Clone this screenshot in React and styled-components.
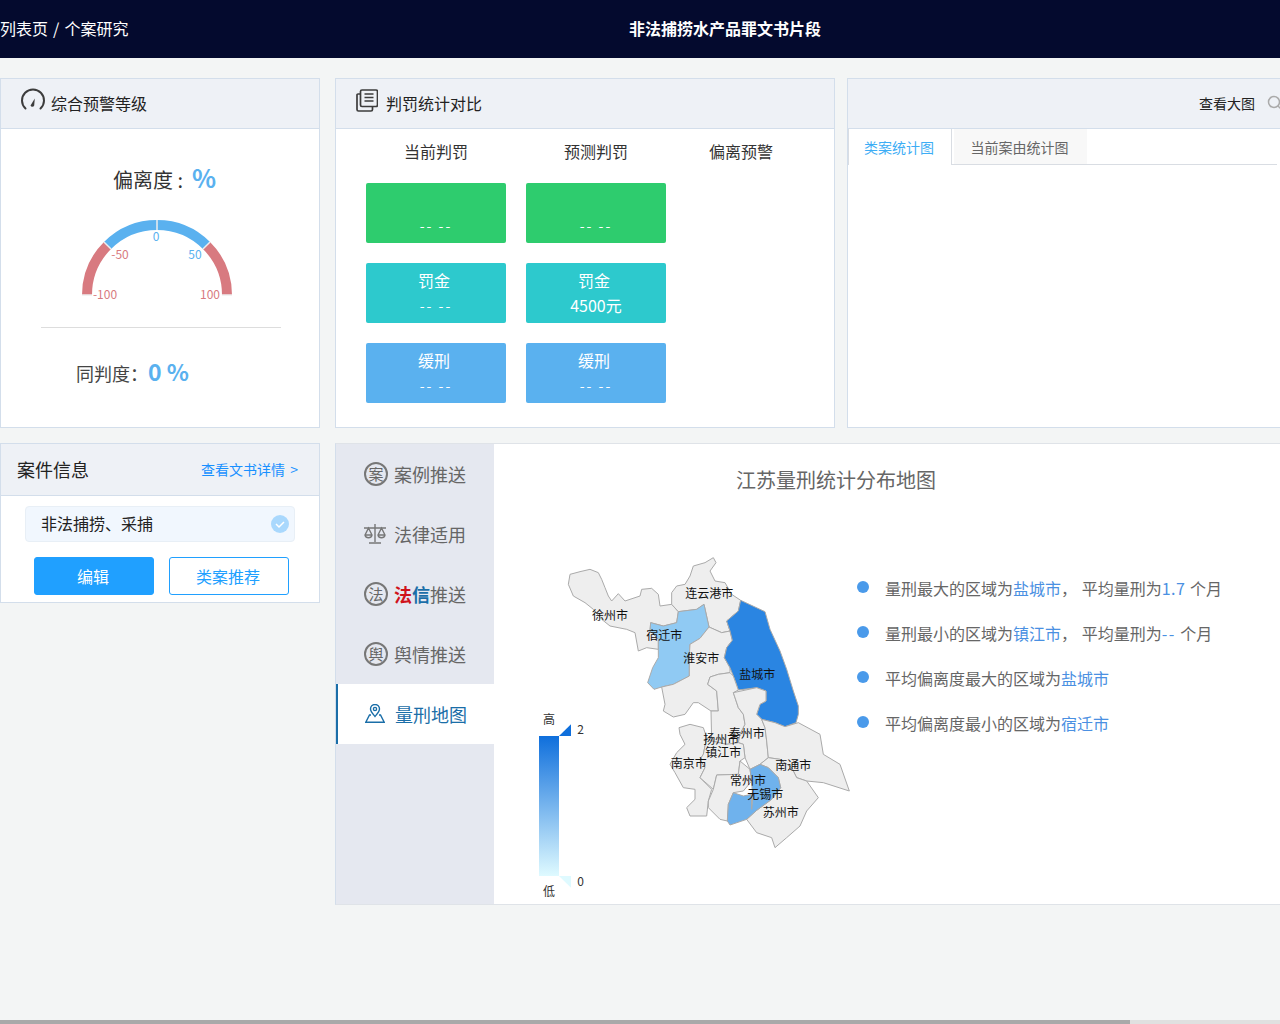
import React from "react";
import styled, { createGlobalStyle } from "styled-components";

const GlobalStyle = createGlobalStyle`
  html, body {
    margin: 0;
    height: 100%;
    background: #f3f5f5;
    font-family: "Noto Sans CJK SC", "Liberation Sans", sans-serif;
    overflow: hidden;
  }
  * { box-sizing: border-box; }
`;

const Viewport = styled.div`
  width: 100vw;
  height: 100vh;
  overflow: hidden;
`;

const ScrollTrack = styled.div`
  position: fixed;
  left: 0;
  right: 0;
  bottom: 0;
  height: 4px;
  background: #e0e0e0;
`;

const ScrollThumb = styled.div`
  width: 1130px;
  height: 4px;
  background: #a9a9a9;
`;

const Page = styled.div`
  width: 1450px;
`;

const Header = styled.header`
  height: 58px;
  padding-bottom: 2px;
  background: #040a2e;
  color: #fff;
  display: grid;
  grid-template-columns: 1fr auto 1fr;
  align-items: center;
  font-size: 16px;
`;

const Crumb = styled.div`
  word-spacing: 1.5px;
`;

const HeaderTitle = styled.div`
  font-weight: 700;
`;

const Main = styled.main`
  padding-top: 20px;
  display: flex;
  flex-direction: column;
  gap: 15px;
`;

const Row = styled.div`
  display: flex;
  align-items: flex-start;
`;

const Card = styled.section`
  width: ${(p) => p.$width}px;
  height: ${(p) => p.$height}px;
  margin-right: ${(p) => p.$gap || 0}px;
  background: #fff;
  border: 1px solid #d3deeb;
  flex-shrink: 0;
`;

const CardHead = styled.div`
  height: 50px;
  padding-bottom: 2px;
  background: #eef1f6;
  border-bottom: 1px solid #d3deeb;
  display: flex;
  align-items: center;
  gap: ${(p) => p.$gap}px;
  padding-left: ${(p) => p.$pad}px;
  font-size: 16px;
  color: #222;
  svg {
    margin-bottom: 4px;
  }
`;

const GaugeBody = styled.div`
  display: flex;
  flex-direction: column;
`;

const Deviation = styled.div`
  margin-top: 30px;
  height: 40px;
  display: flex;
  align-items: center;
  gap: 9px;
  padding-left: 112px;
  font-size: 20px;
  color: #333;
`;

const BigValue = styled.span`
  font-size: ${(p) => p.$size}px;
  font-weight: 700;
  color: #5ab1ef;
  position: relative;
  top: -2px;
`;

const GaugeSvg = styled.svg`
  display: block;
`;

const Divider = styled.div`
  width: 240px;
  height: 1px;
  margin: 18px 0 0 40px;
  background: #ddd;
`;

const Same = styled.div`
  margin: 25px 0 0 75px;
  height: 40px;
  display: flex;
  align-items: center;
  font-size: 18px;
  color: #444;
`;

const Compare = styled.div`
  display: grid;
  grid-template-columns: 140px 140px 110px;
  column-gap: 20px;
  row-gap: 20px;
  padding: 0 0 0 30px;
`;

const ColLabel = styled.div`
  height: 44px;
  padding-bottom: 1px;
  display: flex;
  align-items: center;
  justify-content: center;
  font-size: 16px;
  color: #333;
  grid-row: 1;
  margin-bottom: -10px;
`;

const Block = styled.div`
  height: 60px;
  border-radius: 2px;
  background: ${(p) => p.$color};
  grid-column: ${(p) => p.$col};
  color: #fff;
  font-size: 16px;
  text-align: center;
  display: flex;
  flex-direction: column;
  align-items: center;
  padding-top: 5px;
  line-height: 24px;
`;

const BlockTitle = styled.div`
  height: 24px;
  padding-right: 4px;
`;

const BlockValue = styled.div`
  height: 26px;
  line-height: 26px;
  font-size: ${(p) => (p.$dash ? 14 : 16)}px;
  letter-spacing: ${(p) => (p.$dash ? 2 : 0)}px;
`;

const BigPicHead = styled(CardHead)`
  padding-left: 351px;
  font-size: 14px;
  gap: 12px;
  svg {
    margin-bottom: 0;
  }
`;

const Tabs = styled.div`
  width: 429px;
  height: 36px;
  display: flex;
  border-bottom: 1px solid #d9dde3;
`;

const Tab = styled.div`
  height: ${(p) => (p.$active ? 36 : 35)}px;
  width: ${(p) => p.$width}px;
  margin-right: 2px;
  padding-right: 2px;
  display: flex;
  align-items: center;
  justify-content: center;
  font-size: 14px;
  color: ${(p) => (p.$active ? "#3dadf5" : "#666")};
  background: ${(p) => (p.$active ? "#fff" : "#f8f8f8")};
  border-left: ${(p) => (p.$active ? "1px solid #d9dde3" : "none")};
  border-right: ${(p) => (p.$active ? "1px solid #d9dde3" : "none")};
  position: relative;
  z-index: 1;
`;

const LeftCol = styled.div`
  width: 320px;
  margin-right: 15px;
  flex-shrink: 0;
`;

const InfoHead = styled.div`
  height: 52px;
  background: #eef1f6;
  border-bottom: 1px solid #d3deeb;
  padding: 0 21px 2px 16px;
  display: flex;
  align-items: center;
  justify-content: space-between;
  font-size: 18px;
  color: #222;
`;

const DocLink = styled.a`
  font-size: 14px;
  word-spacing: 2px;
  color: #1890ff;
`;

const Tag = styled.div`
  margin: 10px 0 0 24px;
  width: 270px;
  height: 36px;
  background: #f1f7fe;
  border: 1px solid #e8eff6;
  border-radius: 4px;
  padding: 0 5px 2px 15px;
  display: flex;
  align-items: center;
  justify-content: space-between;
  font-size: 16px;
  color: #222;
  svg {
    margin-top: 2px;
  }
`;

const Buttons = styled.div`
  margin: 15px 0 0 33px;
  display: flex;
  gap: 15px;
`;

const Button = styled.button`
  width: 120px;
  height: 38px;
  border-radius: 3px;
  font-family: inherit;
  font-size: 16px;
  border: 1px solid #20a0ff;
  background: ${(p) => (p.$outline ? "#fff" : "#20a0ff")};
  color: ${(p) => (p.$outline ? "#20a0ff" : "#fff")};
  padding: 0 2px 0 0;
`;

const MapCard = styled.section`
  width: 1115px;
  height: 462px;
  background: #fff;
  border: 1px solid #dfe3e8;
  border-left: 1px solid #d3deeb;
  display: flex;
  flex-shrink: 0;
`;

const Sidebar = styled.nav`
  width: 158px;
  background: #e5e8f0;
  flex-shrink: 0;
`;

const NavItem = styled.div`
  height: 60px;
  padding-bottom: 1px;
  display: flex;
  align-items: center;
  gap: ${(p) => p.$gap || 6}px;
  padding-left: ${(p) => (p.$active ? 27 : 28)}px;
  font-size: 18px;
  color: ${(p) => (p.$active ? "#1a6ea8" : "#666")};
  background: ${(p) => (p.$active ? "#fff" : "transparent")};
  border-left: ${(p) => (p.$active ? "2px solid #1a6ea8" : "none")};
`;

const NavBadge = styled.span`
  width: 24px;
  height: 24px;
  border: 2px solid #777;
  border-radius: 50%;
  display: flex;
  align-items: center;
  justify-content: center;
  font-size: 15px;
  line-height: 1;
`;

const Brand = styled.b`
  color: ${(p) => p.$color};
`;

const MapArea = styled.div`
  flex: 1;
  min-width: 0;
`;

const MapTitle = styled.h2`
  width: 684px;
  margin: 0;
  padding-top: 20px;
  height: 107px;
  text-align: center;
  font-size: 20px;
  font-weight: 400;
  line-height: 32px;
  color: #666;
`;

const MapRow = styled.div`
  display: flex;
  padding-left: 36px;
`;

const MapSvg = styled.svg`
  display: block;
  flex-shrink: 0;
`;

const Facts = styled.ul`
  list-style: none;
  margin: 22px 0 0 -3px;
  padding: 0;
  display: flex;
  flex-direction: column;
  gap: 15px;
`;

const Fact = styled.li`
  height: 30px;
  display: flex;
  align-items: center;
  font-size: 16px;
  word-spacing: 1px;
  white-space: pre;
  color: #666;
  padding-left: 28px;
  position: relative;
  &::before {
    content: "";
    position: absolute;
    left: 0;
    top: 8px;
    width: 12px;
    height: 12px;
    border-radius: 50%;
    background: #4a9aea;
  }
`;

const Hl = styled.span`
  color: #4a90e2;
  letter-spacing: ${(p) => p.$track || 0}px;
`;

const regions = [
  { name: "xuzhou", fill: "#eee", d: "120,70 150,62 180,55 205,65 215,85 225,110 235,135 245,150 265,128 285,150 330,135 335,115 365,112 385,130 390,165 425,160 445,182 440,215 400,225 362,215 360,240 385,265 385,295 350,290 325,300 315,245 290,235 240,225 215,205 190,175 165,155 130,135 115,100" },
  { name: "lianyungang", fill: "#eee", d: "490,45 525,35 550,20 558,35 540,60 555,90 585,95 605,130 632,148 625,180 590,210 600,240 575,245 537,228 522,160 500,175 445,182 425,160 425,125 440,105 465,100 480,75" },
  { name: "suqian", fill: "#90caf3", d: "362,215 400,225 440,215 445,182 500,175 522,160 537,228 510,262 480,280 478,315 478,375 430,400 395,408 372,415 353,395 368,350 385,320 385,265 360,240" },
  { name: "huaian", fill: "#eee", d: "537,228 575,245 600,240 607,268 590,290 583,320 600,350 600,365 565,370 540,378 533,400 560,420 565,480 543,480 505,455 490,455 465,490 430,498 400,480 405,460 395,408 430,400 478,375 478,315 480,280 510,262" },
  { name: "yancheng", fill: "#2a85e2", d: "632,148 705,182 720,235 750,300 770,355 790,420 805,465 805,490 798,515 765,527 735,515 695,505 680,490 690,460 708,450 708,420 680,410 625,417 610,375 600,350 583,320 590,290 607,268 600,240 590,210 625,180" },
  { name: "yangzhou", fill: "#eee", d: "540,378 565,370 600,365 610,375 625,417 610,425 625,470 640,490 645,520 630,550 625,575 590,580 545,570 543,480 565,480 560,420 533,400" },
  { name: "taizhou", fill: "#eee", d: "610,425 680,410 708,420 708,450 690,460 680,490 695,505 705,530 710,570 715,620 690,640 660,655 645,620 640,580 625,575 630,550 645,520 640,490 625,470" },
  { name: "nantong", fill: "#eee", d: "695,505 735,515 765,527 805,515 870,550 880,610 930,640 958,720 880,695 830,690 800,680 785,650 750,625 715,620 710,570 705,530" },
  { name: "nanjing", fill: "#eee", d: "447,530 480,520 520,530 530,560 520,610 510,625 525,650 510,680 545,715 535,750 530,795 480,795 470,770 495,745 495,715 460,710 435,665 420,640 440,605 465,580 450,550" },
  { name: "zhenjiang", fill: "#eee", d: "545,570 590,580 625,575 640,580 645,620 630,630 625,670 560,672 550,715 510,680 525,650 510,625 520,610 530,560" },
  { name: "changzhou", fill: "#eee", d: "560,672 625,670 630,630 660,655 665,690 640,720 610,725 595,760 592,810 570,805 535,770 535,750 550,715" },
  { name: "suzhou", fill: "#eee", d: "715,620 750,625 785,650 800,680 830,690 865,740 830,780 810,825 770,860 735,890 725,860 680,845 650,805 680,778 725,745 752,710 745,680 715,650 690,640" },
  { name: "wuxi", fill: "#6fb2ed", d: "660,655 690,640 715,650 745,680 752,710 725,745 680,778 650,805 600,822 592,810 595,760 610,725 640,735 665,730 665,775 668,740 665,690" },
];

const cityLabels = [
  ["连云港市", 538, 140],
  ["徐州市", 240, 206],
  ["宿迁市", 403, 266],
  ["淮安市", 514, 337],
  ["盐城市", 682, 383],
  ["泰州市", 650, 560],
  ["扬州市", 574, 578],
  ["镇江市", 580, 617],
  ["南京市", 476, 651],
  ["南通市", 790, 657],
  ["常州市", 654, 702],
  ["无锡市", 706, 743],
  ["苏州市", 752, 798],
];

function GaugeIcon() {
  return (
    <svg width="26" height="26" viewBox="0 0 26 26" fill="none" stroke="#3c3c3c" strokeWidth="2" strokeLinecap="round">
      <path d="M5.500 20.500A11 11 0 1 1 20.500 20.500" />
      <path d="M10.500 17.500 14.800 10.500 14.200 17.500A2 2 0 0 1 10.500 17.500Z" fill="#3c3c3c" stroke="none" />
    </svg>
  );
}

function CopyIcon() {
  return (
    <svg width="22" height="23" viewBox="0 0 22 23" fill="none" stroke="#3c3c3c" strokeWidth="1.700" strokeLinejoin="round">
      <path d="M6 1h14a1.500 1.500 0 0 1 1.500 1.500V16a1.500 1.500 0 0 1-1.500 1.500H6A1.500 1.500 0 0 1 4.500 16V2.500A1.500 1.500 0 0 1 6 1Z" />
      <path d="M4.500 5H2A1 1 0 0 0 1 6v14.500A1.500 1.500 0 0 0 2.500 22H15a1.500 1.500 0 0 0 1.500-1.500v-3" />
      <path d="M8.500 5h9M8.500 8.500h9M8.500 12h9" strokeWidth="1.300" />
    </svg>
  );
}

function SearchIcon() {
  return (
    <svg width="16" height="16" viewBox="0 0 16 16" fill="none" stroke="#aaa" strokeWidth="1.500">
      <circle cx="7" cy="7" r="5.500" />
      <path d="M11 11l4 4" />
    </svg>
  );
}

function CheckDot() {
  return (
    <svg width="18" height="18" viewBox="0 0 18 18">
      <circle cx="9" cy="9" r="9" fill="#a9d8fd" />
      <path d="M5 9l3 3 5-5" fill="none" stroke="#fff" strokeWidth="1.500" />
    </svg>
  );
}

function ScaleIcon() {
  return (
    <svg width="22" height="20" viewBox="0 0 22 20" fill="none" stroke="#777" strokeWidth="1.400">
      <path d="M0 4h22M11 0v18M5 19h12" />
      <path d="M4.500 4 1 11a3.600 3.600 0 0 0 7 0Z M1 11h7" />
      <path d="M17.500 4 14 11a3.600 3.600 0 0 0 7 0Z M14 11h7" />
    </svg>
  );
}

function PinIcon() {
  return (
    <svg width="20" height="19" viewBox="0 0 20 19" fill="none" stroke="#1a6ea8" strokeWidth="1.400">
      <path d="M10 12.500C7.500 9.500 5.500 7.500 5.500 5a4.500 4.500 0 0 1 9 0C14.500 7.500 12.500 9.500 10 12.500Z" />
      <circle cx="10" cy="5" r="1.600" />
      <path d="M6 11H4.500L.8 18.200h18.400L15.500 11H14" />
    </svg>
  );
}

function Gauge() {
  const cx = 156;
  const cy = 96;
  const r = 70;
  const point = (deg) => {
    const a = (deg * Math.PI) / 180;
    return [cx + r * Math.cos(a), cy - r * Math.sin(a)];
  };
  const arc = (from, to) => {
    const [x1, y1] = point(from);
    const [x2, y2] = point(to);
    return `M${x1} ${y1}A${r} ${r} 0 0 1 ${x2} ${y2}`;
  };
  const tick = (deg) => {
    const a = (deg * Math.PI) / 180;
    return `M${cx + 65 * Math.cos(a)} ${cy - 65 * Math.sin(a)}L${cx + 75 * Math.cos(a)} ${cy - 75 * Math.sin(a)}`;
  };
  return (
    <GaugeSvg width="318" height="110" viewBox="0 0 318 110" fontFamily="Noto Sans CJK SC, sans-serif" fontSize="12">
      <g fill="none" strokeWidth="10">
        <path d={arc(180, 135)} stroke="#d87a80" />
        <path d={arc(135, 45)} stroke="#5ab1ef" />
        <path d={arc(45, 0)} stroke="#d87a80" />
      </g>
      <g fill="none" stroke="#eee" strokeWidth="1.500">
        <path d={tick(135)} />
        <path d={tick(45)} />
        <path d={tick(180)} />
        <path d={tick(0)} />
        <path d={tick(90)} />
      </g>
      <g textAnchor="middle">
        <text x="155" y="42" fill="#5ab1ef">0</text>
        <text x="119" y="60" fill="#d87a80">-50</text>
        <text x="194" y="60" fill="#5ab1ef">50</text>
        <text x="104" y="100" fill="#d87a80">-100</text>
        <text x="209" y="100" fill="#d87a80">100</text>
      </g>
    </GaugeSvg>
  );
}

function JiangsuMap() {
  return (
    <MapSvg width="330" height="355" viewBox="0 0 990 1065" fontFamily="Noto Sans CJK SC, sans-serif">
      <defs>
        <linearGradient id="scale" x1="0" y1="0" x2="0" y2="1">
          <stop offset="0" stopColor="#0f6fdc" />
          <stop offset="1" stopColor="#dffaff" />
        </linearGradient>
      </defs>
      {regions.map((r) => (
        <polygon key={r.name} points={r.d} fill={r.fill} stroke="#aaa" strokeWidth="3" strokeLinejoin="round" />
      ))}
      <g fontSize="36" textAnchor="middle" fill="#111">
        {cityLabels.map(([label, x, y]) => (
          <text key={label} x={x} y={y}>{label}</text>
        ))}
      </g>
      <rect x="27" y="555" width="60" height="420" fill="url(#scale)" />
      <polygon points="87,555 123,555 123,520" fill="#0f6fdc" />
      <polygon points="87,975 123,975 123,1010" fill="#dffaff" />
      <g fontSize="36" fill="#333">
        <text x="57" y="519" textAnchor="middle">高</text>
        <text x="57" y="1036" textAnchor="middle">低</text>
        <text x="142" y="549">2</text>
        <text x="142" y="1006">0</text>
      </g>
    </MapSvg>
  );
}

const rows = [
  { color: "#2ecc6e", title: "", left: "-- --", right: "-- --" },
  { color: "#2dc9cd", title: "罚金", left: "-- --", right: "4500元" },
  { color: "#5ab1ef", title: "缓刑", left: "-- --", right: "-- --" },
];

function App() {
  return (
    <Viewport>
      <GlobalStyle />
      <Page>
        <Header>
          <Crumb>列表页 / 个案研究</Crumb>
          <HeaderTitle>非法捕捞水产品罪文书片段</HeaderTitle>
          <div />
        </Header>
        <Main>
          <Row>
            <Card $width={320} $height={350} $gap={15}>
              <CardHead $pad={19} $gap={5}>
                <GaugeIcon />
                <span>综合预警等级</span>
              </CardHead>
              <GaugeBody>
                <Deviation>
                  <span>偏离度 :</span>
                  <BigValue $size={25}>%</BigValue>
                </Deviation>
                <Gauge />
                <Divider />
                <Same>
                  <span>同判度：</span>
                  <BigValue $size={23}>0 %</BigValue>
                </Same>
              </GaugeBody>
            </Card>
            <Card $width={500} $height={350} $gap={12}>
              <CardHead $pad={20} $gap={8}>
                <CopyIcon />
                <span>判罚统计对比</span>
              </CardHead>
              <Compare>
                <ColLabel>当前判罚</ColLabel>
                <ColLabel>预测判罚</ColLabel>
                <ColLabel>偏离预警</ColLabel>
                {rows.map((r) => (
                  <React.Fragment key={r.color}>
                    <Block $color={r.color} $col={1}>
                      <BlockTitle>{r.title}</BlockTitle>
                      <BlockValue $dash>{r.left}</BlockValue>
                    </Block>
                    <Block $color={r.color} $col={2}>
                      <BlockTitle>{r.title}</BlockTitle>
                      <BlockValue $dash={r.right === "-- --"}>{r.right}</BlockValue>
                    </Block>
                  </React.Fragment>
                ))}
              </Compare>
            </Card>
            <Card $width={603} $height={350}>
              <BigPicHead>
                <span>查看大图</span>
                <SearchIcon />
              </BigPicHead>
              <Tabs>
                <Tab $active $width={104}>类案统计图</Tab>
                <Tab $width={133}>当前案由统计图</Tab>
              </Tabs>
            </Card>
          </Row>
          <Row>
            <LeftCol>
              <Card $width={320} $height={160}>
                <InfoHead>
                  <span>案件信息</span>
                  <DocLink>查看文书详情 &gt;</DocLink>
                </InfoHead>
                <Tag>
                  <span>非法捕捞、采捕</span>
                  <CheckDot />
                </Tag>
                <Buttons>
                  <Button>编辑</Button>
                  <Button $outline>类案推荐</Button>
                </Buttons>
              </Card>
            </LeftCol>
            <MapCard>
              <Sidebar>
                <NavItem><NavBadge>案</NavBadge>案例推送</NavItem>
                <NavItem $gap={8}><ScaleIcon />法律适用</NavItem>
                <NavItem>
                  <NavBadge>法</NavBadge>
                  <span><Brand $color="#d0121b">法</Brand><Brand $color="#1a6ea8">信</Brand>推送</span>
                </NavItem>
                <NavItem><NavBadge>舆</NavBadge>舆情推送</NavItem>
                <NavItem $active $gap={10}><PinIcon />量刑地图</NavItem>
              </Sidebar>
              <MapArea>
                <MapTitle>江苏量刑统计分布地图</MapTitle>
                <MapRow>
                  <JiangsuMap />
                  <Facts>
                    <Fact>量刑最大的区域为<Hl>盐城市</Hl>，{"\u00a0"}平均量刑为<Hl $track={0.5}>1.7</Hl>{"\u00a0"}个月</Fact>
                    <Fact>量刑最小的区域为<Hl>镇江市</Hl>，{"\u00a0"}平均量刑为<Hl $track={1.5}>--</Hl>{"\u00a0"}个月</Fact>
                    <Fact>平均偏离度最大的区域为<Hl>盐城市</Hl></Fact>
                    <Fact>平均偏离度最小的区域为<Hl>宿迁市</Hl></Fact>
                  </Facts>
                </MapRow>
              </MapArea>
            </MapCard>
          </Row>
        </Main>
      </Page>
      <ScrollTrack>
        <ScrollThumb />
      </ScrollTrack>
    </Viewport>
  );
}

export default App;
